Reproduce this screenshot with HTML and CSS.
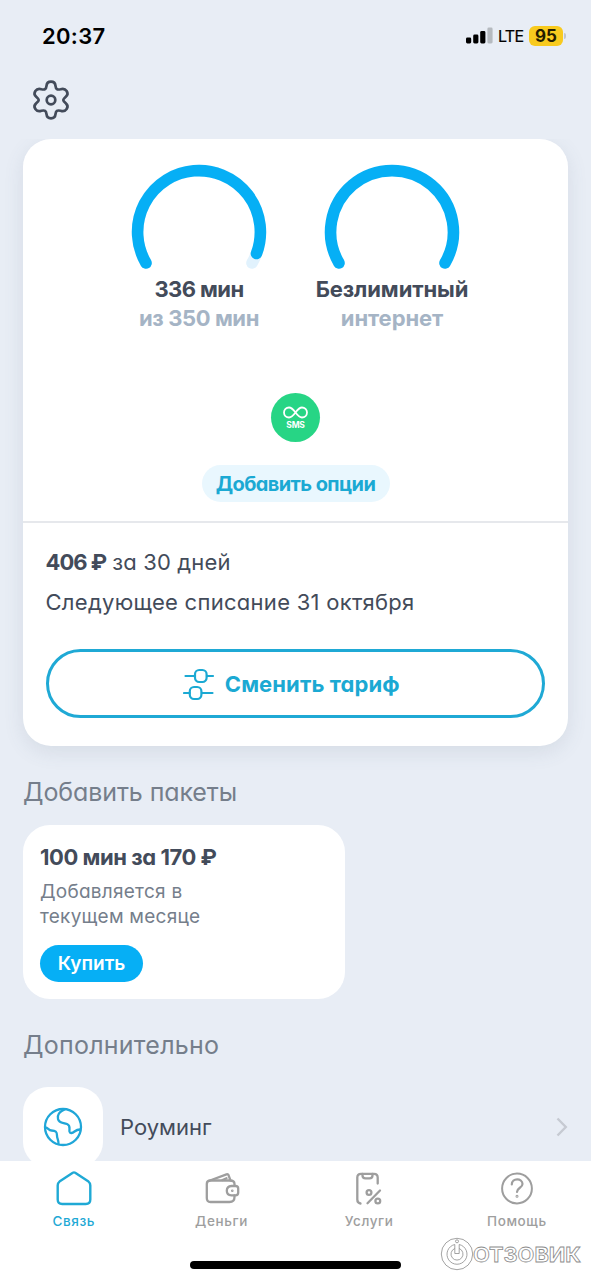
FILE: index.html
```html
<!DOCTYPE html>
<html lang="ru">
<head>
<meta charset="utf-8">
<title>Связь</title>
<link rel="stylesheet" href="styles.css">
</head>
<body>
<div class="screen">
  <header class="status">
    <span class="clock">20:37</span>
    <div class="indicators">
      <svg class="signal" width="27" height="17" viewBox="0 0 27 17">
        <rect x="0" y="10.5" width="5.2" height="6" rx="1.4" fill="#000"/>
        <rect x="7.2" y="7.5" width="5.2" height="9" rx="1.4" fill="#000"/>
        <rect x="14.2" y="4" width="5.2" height="12.5" rx="1.4" fill="#000"/>
        <rect x="21.4" y="0.5" width="5.2" height="16" rx="1.4" fill="#b5babf"/>
      </svg>
      <span class="network">LTE</span>
      <span class="battery">95</span>
      <span class="battery-tip"></span>
    </div>
  </header>

  <div class="toolbar">
    <svg class="gear" width="40" height="42" viewBox="-20 -21 40 42" fill="none" stroke="#434b5a" stroke-width="2.7" stroke-linejoin="round">
      <path d="M-4.5 -14.2C-4 -19.7 4 -19.7 4.5 -14.2C4.9 -10.6 6.2 -10 9.600 -10.800C14.800 -12.600 18.800 -6.800 14.800 -3.300C11.400 -0.300 11.400 0.300 14.800 3.300C18.800 6.800 14.800 12.600 9.600 10.800C6.2 10 4.9 10.6 4.5 14.2C4 19.7 -4 19.7 -4.5 14.2C-4.9 10.6 -6.2 10 -9.600 10.800C-14.800 12.600 -18.800 6.800 -14.800 3.300C-11.400 0.300 -11.400 -0.300 -14.800 -3.300C-18.800 -6.800 -14.800 -12.600 -9.600 -10.800C-6.2 -10 -4.9 -10.6 -4.5 -14.2Z"/>
      <circle r="4.3"/>
    </svg>
  </div>

  <main class="content">
    <section class="plan">
      <div class="usage">
        <div class="gauges">
          <div class="gauge">
            <svg width="136" height="108" viewBox="-68 -68 136 108" fill="none" stroke-width="11.6" stroke-linecap="round">
              <path stroke="#e1f2fd" d="M-53 31A61.4 61.4 0 1 1 53 31"/>
              <path stroke="#06aff5" d="M-53 31A61.4 61.4 0 1 1 57.5 21.5"/>
            </svg>
            <span class="amount minutes">336 мин</span>
            <span class="limit total">из 350 мин</span>
          </div>
          <div class="gauge">
            <svg width="136" height="108" viewBox="-68 -68 136 108" fill="none" stroke-width="11.6" stroke-linecap="round">
              <path stroke="#06aff5" d="M-53 31A61.4 61.4 0 1 1 53 31"/>
            </svg>
            <span class="amount unlimited">Безлимитный</span>
            <span class="limit internet">интернет</span>
          </div>
        </div>
        <div class="sms">
          <svg width="25" height="13" viewBox="0 0 25 13" fill="none" stroke="#fff" stroke-width="1.8">
            <path d="M12.5 6.5C9.7 2.7 8 1.5 6 1.5A5 5 0 0 0 6 11.5C8 11.5 9.7 10.3 12.5 6.5C15.3 2.7 17 1.5 19 1.5A5 5 0 0 1 19 11.5C17 11.5 15.3 10.3 12.5 6.5Z"/>
          </svg>
          <span class="sms-label">SMS</span>
        </div>
        <button class="add-options">Добавить опции</button>
      </div>
      <div class="billing">
        <p class="price"><b>406 ₽</b> <span>за 30 дней</span></p>
        <p class="next">Следующее списание 31 октября</p>
        <button class="change">
          <svg width="32" height="34" viewBox="0 0 32 34" fill="none" stroke="#1ba9d3" stroke-width="2.2" stroke-linecap="round">
            <path d="M2.5 9H12M24 9H30M1 26H6.5M19 26H29.5"/>
            <rect x="12" y="3" width="11.6" height="12" rx="4.2"/>
            <rect x="6.8" y="20" width="11.6" height="12" rx="4.2"/>
          </svg>
          <span>Сменить тариф</span>
        </button>
      </div>
    </section>

    <h2 class="heading packs">Добавить пакеты</h2>
    <section class="pack">
      <h3 class="pack-title">100 мин за 170 ₽</h3>
      <p class="pack-note">Добавляется в<br>текущем месяце</p>
      <button class="buy">Купить</button>
    </section>

    <h2 class="heading extra">Дополнительно</h2>
    <div class="row">
      <div class="tile">
        <svg width="40" height="40" viewBox="-20 -20 40 40" fill="none" stroke="#1fa6d8" stroke-width="2.3" stroke-linejoin="round" stroke-linecap="round">
          <circle r="18"/>
          <path d="M1.500 -17.500C-3 -15.500 -6 -12 -5 -8C-4 -3.500 0 -4.500 4 -3C8 -1.500 6 1.500 6.500 4.500C7 7 9.500 6 11.500 4.500C13.500 3 15 2.500 17 2.500"/>
          <path d="M-17.500 0.500C-15 0.500 -14.500 3.500 -11.500 3.500C-7 3.500 -6 5 -6 8.500C-6 12 -4.500 12 -4.500 17"/>
        </svg>
      </div>
      <span class="row-label">Роуминг</span>
      <svg class="chevron" width="12" height="20" viewBox="0 0 12 20" fill="none" stroke="#c6cad2" stroke-width="2.4"><path d="M1.500 1.500L9.800 10L1.500 18.500"/></svg>
    </div>
  </main>

  <nav class="tabs">
    <div class="tab active">
      <svg width="40" height="38" viewBox="0 0 40 38" fill="none" stroke="#1fa9d5" stroke-width="2.4" stroke-linejoin="round">
        <path d="M3.700 16.500Q3.700 14 5.500 12.600L18.800 3.800Q20 3 21.200 3.800L34.500 12.600Q36.300 14 36.300 16.500V30.500Q36.300 35 31.800 35H8.200Q3.700 35 3.700 30.500Z"/>
      </svg>
      <span class="t1">Связь</span>
    </div>
    <div class="tab">
      <svg width="40" height="38" viewBox="0 0 40 38" fill="none" stroke="#9e9e9e" stroke-width="2.3" stroke-linejoin="round" stroke-linecap="round">
        <path d="M32.500 16V15Q32.500 11.500 28 11.500H8.500Q4.800 11.500 4.800 15V29Q4.800 33 8.500 33H27.500Q32.500 33 32.500 28V26.500"/>
        <path d="M8 11.500L24.500 5.300Q26 4.800 26.600 6.300L28.500 11.500M20.500 11L24.500 9.300"/>
        <path d="M29.500 17H33.500Q36.200 17 36.200 19.500V23.800Q36.200 26.300 33.500 26.300H29.500Q24.800 26 24.800 21.700Q24.800 17.300 29.500 17Z"/>
        <circle cx="30.300" cy="21.700" r="0.500" stroke-width="1.600"/>
      </svg>
      <span class="t2">Деньги</span>
    </div>
    <div class="tab">
      <svg width="40" height="38" viewBox="0 0 40 38" fill="none" stroke="#9e9e9e" stroke-width="2.300" stroke-linejoin="round" stroke-linecap="round">
        <path d="M11.500 34.500Q8.300 34 8.300 30.500V8.500Q8.300 4.800 12 4.800H25Q28.700 4.800 28.700 8.500V14.500"/>
        <path d="M13.500 5V6.500Q13.500 9.300 16.500 9.300H20.500Q23.500 9.300 23.500 6.500V5"/>
        <circle cx="20" cy="23.500" r="2.400"/><circle cx="28.800" cy="32" r="2.400"/><path d="M31 21.500L18.500 34.200"/>
      </svg>
      <span class="t3">Услуги</span>
    </div>
    <div class="tab">
      <svg width="40" height="38" viewBox="0 0 40 38" fill="none" stroke="#9e9e9e" stroke-width="2" stroke-linecap="round">
        <circle cx="20" cy="19.500" r="14.900"/>
        <path d="M14.800 15.500C14.800 8.500 25.500 9 25.500 15C25.500 19 20 18.500 20 23" stroke-width="2.200"/>
        <circle cx="20" cy="27.300" r="0.500"/>
      </svg>
      <span class="t4">Помощь</span>
    </div>
  </nav>
  <div class="home-bar"></div>
  <div class="watermark">
    <svg width="146" height="34" viewBox="0 0 146 34" fill="none" stroke="#8c8c8c" stroke-width="0.800">
      <circle cx="17" cy="17" r="15.700" fill="#fff"/>
      <path d="M14.800 7.500V16.500H19.200V7.500A10 10 0 1 1 14.800 7.500Z"/>
      <path d="M14.800 11.500A6 6 0 1 0 19.200 11.500"/>
      <circle cx="17" cy="4.300" r="1.500"/>
      <text class="mark" x="33" y="24.600" textLength="108" lengthAdjust="spacingAndGlyphs">ОТЗОВИК</text>
    </svg>
  </div>
</div>
</body>
</html>
```
FILE: styles.css
```css
* { box-sizing: border-box; }
body { margin: 0; background: #e8edf5; font-family: Inter, "Noto Sans", sans-serif; font-feature-settings: "cv11"; color: #434b5a; }
p, h2, h3 { margin: 0; }
button { font: inherit; font-feature-settings: inherit; border: 0; padding: 0; white-space: nowrap; }
span, b { white-space: nowrap; }
svg { display: block; flex: none; }
.screen { position: relative; width: 591px; height: 1280px; overflow: hidden; display: flex; flex-direction: column; }

.status { height: 72px; flex: none; display: flex; justify-content: space-between; padding: 0 25px 0 42px; align-items: center; color: #000; }
.clock { font-size: 22px; font-weight: 600; line-height: 26px; letter-spacing: 0.3px; }
.indicators { display: flex; align-items: center; }
.signal { position: relative; top: -1px; }
.network { font-size: 16px; line-height: 20px; margin-left: 5px; width: 26px; letter-spacing: -0.7px; -webkit-text-stroke: 0.2px #000; }
.battery { width: 34px; height: 20px; margin-left: 5px; border-radius: 6px; background: #f8ca1e; color: #241c00; font-size: 17px; font-weight: 700; line-height: 20px; text-align: center; }
.battery-tip { width: 2px; height: 6px; margin-left: 1px; border-radius: 0 2px 2px 0; background: #c1c5cc; }

.toolbar { height: 67px; flex: none; padding: 7px 0 0 31px; }

.content { height: 1022px; flex: none; padding: 0 23px; overflow: hidden; }
.plan { height: 607px; border-radius: 28px; background: #fff; box-shadow: 0 6px 20px rgba(80, 95, 120, 0.12); }
.usage { height: 384px; padding-top: 25px; border-bottom: 2px solid #e6e8ec; display: flex; flex-direction: column; align-items: center; }
.gauges { display: flex; }
.gauge { width: 193px; display: flex; flex-direction: column; align-items: center; }
.amount { font-size: 22px; font-weight: 700; line-height: 30px; margin-top: 2px; }
.minutes { letter-spacing: -0.6px; }
.unlimited { letter-spacing: -0.1px; }
.limit { font-size: 22px; font-weight: 700; line-height: 28px; color: #a5b4c5; }
.total { letter-spacing: -0.4px; }
.internet { letter-spacing: -0.1px; }
.sms { width: 49px; height: 49px; margin-top: 61px; border-radius: 50%; background: #27d585; display: flex; flex-direction: column; align-items: center; padding-top: 13px; color: #fff; }
.sms-label { font-size: 8.500px; font-weight: 700; line-height: 12px; letter-spacing: -0.2px; }
.add-options { width: 188px; height: 37px; margin-top: 23px; border-radius: 19px; background: #e9f7fe; color: #1ba9d3; font-size: 20px; font-weight: 700; letter-spacing: -0.6px; }

.billing { padding: 24px 23px 0 22.500px; }
.price { font-size: 22px; line-height: 30px; }
.price b { letter-spacing: -1px; }
.price span { letter-spacing: 0.15px; }
.next { font-size: 22px; line-height: 30px; margin-top: 10px; letter-spacing: 0.28px; }
.change { width: 100%; height: 69px; margin-top: 32px; border: 3px solid #1fa9d5; border-radius: 35px; background: #fff; color: #1ba9d3; font-size: 22px; font-weight: 700; display: flex; align-items: center; justify-content: center; gap: 10px; padding-right: 8px; letter-spacing: 0.1px; }

.heading { font-size: 25px; font-weight: 400; line-height: 32px; color: #757e8b; }
.packs { margin-top: 30px; letter-spacing: -0.1px; }
.pack { width: 322px; height: 174px; margin-top: 17px; padding: 17px 17px 0; border-radius: 27px; background: #fff; }
.pack-title { font-size: 22px; font-weight: 700; line-height: 30px; letter-spacing: -0.45px; }
.pack-note { font-size: 19px; line-height: 25px; margin-top: 7px; color: #757e8b; letter-spacing: 0.25px; }
.buy { display: block; width: 103px; height: 37px; margin-top: 16px; border-radius: 19px; background: #06aff5; color: #fff; font-size: 19px; font-weight: 600; }
.extra { margin-top: 30px; letter-spacing: 0.25px; }
.row { height: 80px; margin-top: 26px; display: flex; align-items: center; }
.tile { width: 80px; height: 80px; border-radius: 25px; background: #fff; display: flex; align-items: center; justify-content: center; }
.row-label { font-size: 22px; line-height: 30px; margin-left: 17px; }
.chevron { margin-left: auto; }

.tabs { height: 119px; flex: none; background: #fff; display: flex; padding-top: 8px; }
.tab { width: 147.700px; display: flex; flex-direction: column; align-items: center; font-size: 13.500px; font-weight: 500; line-height: 18px; color: #9e9e9e; gap: 5px; font-feature-settings: normal; letter-spacing: 0.6px; }
.tab.active { color: #1fa9d5; }
.home-bar { position: absolute; left: 190px; top: 1261px; width: 211px; height: 8px; border-radius: 4px; background: #000; }
.watermark { position: absolute; left: 440px; top: 1237px; }
.mark { font-family: Inter, sans-serif; font-size: 20.500px; font-weight: 700; fill: #fff; }
```
